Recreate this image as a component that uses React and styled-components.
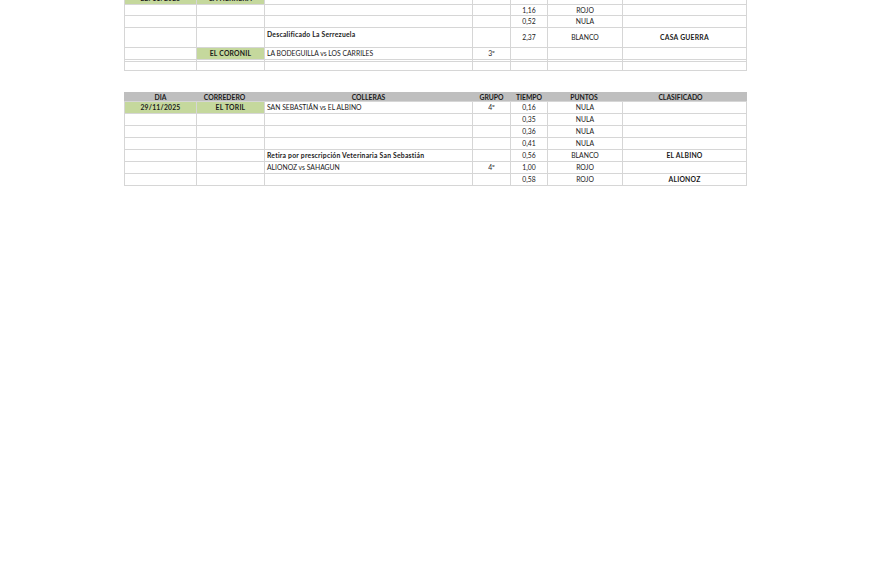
import React from "react";
import styled, { createGlobalStyle } from "styled-components";

const Global = createGlobalStyle`
  html, body { margin: 0; padding: 0; background: #ffffff; }
  body { width: 870px; height: 570px; overflow: hidden; font-family: Lato, "Open Sans", "Liberation Sans", sans-serif; }
`;

const Page = styled.div`
  display: flex;
  flex-direction: column;
  gap: 21px;
  padding-left: 124px;
  margin-top: -8px;
`;

const Sheet = styled.table`
  width: 622px;
  border-collapse: collapse;
  table-layout: fixed;
  font-family: Lato, "Open Sans", "Liberation Sans", sans-serif;
  font-size: 6.8px;
  color: #1a1a1a;
`;

const Row = styled.tr`
  height: ${(p) => p.$h}px;
`;

const Cell = styled.td`
  border: 1px solid #d6d6d6;
  padding: 0 2px;
  line-height: 1;
  white-space: nowrap;
  overflow: hidden;
  text-align: ${(p) => p.$align || "center"};
  vertical-align: ${(p) => p.$valign || "middle"};
  font-weight: ${(p) => (p.$bold ? 700 : 400)};
  letter-spacing: ${(p) => (p.$bold ? "0.22px" : "0")};
  background: ${(p) => (p.$fill ? "#c5d89d" : "transparent")};
  padding-top: ${(p) => (p.$valign === "top" ? "3px" : "0")};
`;

const Head = styled.th`
  background: #bfbfbf;
  border: 1px solid #bfbfbf;
  border-bottom-color: #d6d6d6;
  padding: 0 ${(p) => p.$pr || 2}px 0 2px;
  line-height: 1;
  font-weight: 700;
  text-align: center;
  white-space: nowrap;
`;

const widths = [72, 68, 208, 38, 37, 75, 124];

const Cols = () => (
  <colgroup>
    {widths.map((w, i) => (
      <col key={i} style={{ width: w }} />
    ))}
  </colgroup>
);

const first = [
  { h: 12, c: [{ t: "22/11/2025", fill: true, bold: true }, { t: "LA HERRERA", fill: true, bold: true }, { t: "" }, { t: "" }, { t: "" }, { t: "" }, { t: "" }] },
  { h: 11, c: [{}, {}, {}, {}, { t: "1,16" }, { t: "ROJO" }, {}] },
  { h: 12, c: [{}, {}, {}, {}, { t: "0,52" }, { t: "NULA" }, {}] },
  { h: 20, c: [{}, {}, { t: "Descalificado La Serrezuela", bold: true, align: "left", valign: "top" }, {}, { t: "2,37" }, { t: "BLANCO" }, { t: "CASA GUERRA", bold: true }] },
  { h: 12, c: [{}, { t: "EL CORONIL", fill: true, bold: true }, { t: "LA BODEGUILLA vs LOS CARRILES", align: "left" }, { t: "3º" }, {}, {}, {}] },
  { h: 2, c: [{}, {}, {}, {}, {}, {}, {}] },
  { h: 9, c: [{}, {}, {}, {}, {}, {}, {}] },
];

const second = [
  { h: 12, c: [{ t: "29/11/2025", fill: true, bold: true }, { t: "EL TORIL", fill: true, bold: true }, { t: "SAN SEBASTIÁN vs EL ALBINO", align: "left" }, { t: "4º" }, { t: "0,16" }, { t: "NULA" }, {}] },
  { h: 12, c: [{}, {}, {}, {}, { t: "0,35" }, { t: "NULA" }, {}] },
  { h: 12, c: [{}, {}, {}, {}, { t: "0,36" }, { t: "NULA" }, {}] },
  { h: 12, c: [{}, {}, {}, {}, { t: "0,41" }, { t: "NULA" }, {}] },
  { h: 12, c: [{}, {}, { t: "Retira por prescripción Veterinaria San Sebastián", bold: true, align: "left" }, {}, { t: "0,56" }, { t: "BLANCO" }, { t: "EL ALBINO", bold: true }] },
  { h: 12, c: [{}, {}, { t: "ALIONOZ vs SAHAGUN", align: "left" }, { t: "4º" }, { t: "1,00" }, { t: "ROJO" }, {}] },
  { h: 12, c: [{}, {}, {}, {}, { t: "0,58" }, { t: "ROJO" }, { t: "ALIONOZ", bold: true }] },
];

const Body = ({ rows }) => (
  <tbody>
    {rows.map((r, i) => (
      <Row key={i} $h={r.h}>
        {r.c.map((c, j) => (
          <Cell key={j} $fill={c.fill} $bold={c.bold} $align={c.align} $valign={c.valign}>
            {c.t || ""}
          </Cell>
        ))}
      </Row>
    ))}
  </tbody>
);

const headers = [
  { t: "DIA" },
  { t: "CORREDERO", pr: 14 },
  { t: "COLLERAS" },
  { t: "GRUPO" },
  { t: "TIEMPO" },
  { t: "PUNTOS", pr: 4 },
  { t: "CLASIFICADO", pr: 10 },
];

export default function App() {
  return (
    <>
      <Global />
      <Page>
        <Sheet>
          <Cols />
          <Body rows={first} />
        </Sheet>
        <Sheet>
          <Cols />
          <thead>
            <Row $h={9}>
              {headers.map((h) => (
                <Head key={h.t} $pr={h.pr}>
                  {h.t}
                </Head>
              ))}
            </Row>
          </thead>
          <Body rows={second} />
        </Sheet>
      </Page>
    </>
  );
}
